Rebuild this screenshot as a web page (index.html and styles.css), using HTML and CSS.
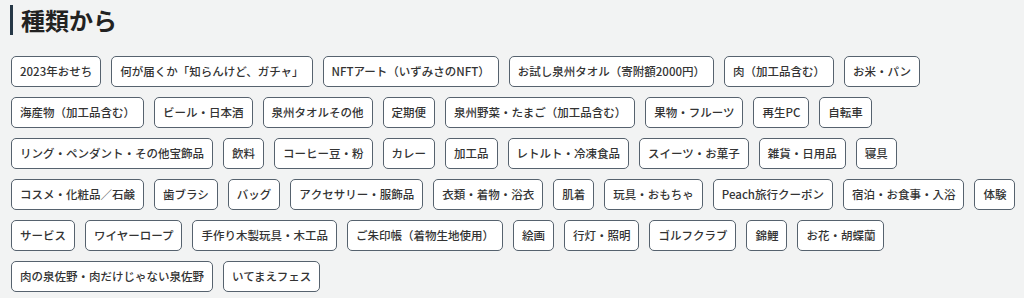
FILE: index.html
```html
<!DOCTYPE html>
<html lang="ja">
<head>
    <meta charset="UTF-8">
    <meta name="viewport" content="width=device-width, initial-scale=1.0">
    <title>種類から</title>
    <link rel="stylesheet" href="styles.css">
</head>
<body>
    <section class="category">
        <h2 class="category-title">種類から</h2>

        <div class="tag-list">
            <div class="tag-row">
                <a class="tag" href="#">2023年おせち</a>
                <a class="tag" href="#">何が届くか「知らんけど、ガチャ」</a>
                <a class="tag" href="#">NFTアート（いずみさのNFT）</a>
                <a class="tag" href="#">お試し泉州タオル（寄附額2000円）</a>
                <a class="tag" href="#">肉（加工品含む）</a>
                <a class="tag" href="#">お米・パン</a>
            </div>
            <div class="tag-row">
                <a class="tag" href="#">海産物（加工品含む）</a>
                <a class="tag" href="#">ビール・日本酒</a>
                <a class="tag" href="#">泉州タオルその他</a>
                <a class="tag" href="#">定期便</a>
                <a class="tag" href="#">泉州野菜・たまご（加工品含む）</a>
                <a class="tag" href="#">果物・フルーツ</a>
                <a class="tag" href="#">再生PC</a>
                <a class="tag" href="#">自転車</a>
            </div>
            <div class="tag-row">
                <a class="tag" href="#">リング・ペンダント・その他宝飾品</a>
                <a class="tag" href="#">飲料</a>
                <a class="tag" href="#">コーヒー豆・粉</a>
                <a class="tag" href="#">カレー</a>
                <a class="tag" href="#">加工品</a>
                <a class="tag" href="#">レトルト・冷凍食品</a>
                <a class="tag" href="#">スイーツ・お菓子</a>
                <a class="tag" href="#">雑貨・日用品</a>
                <a class="tag" href="#">寝具</a>
            </div>
            <div class="tag-row">
                <a class="tag" href="#">コスメ・化粧品／石鹸</a>
                <a class="tag" href="#">歯ブラシ</a>
                <a class="tag" href="#">バッグ</a>
                <a class="tag" href="#">アクセサリー・服飾品</a>
                <a class="tag" href="#">衣類・着物・浴衣</a>
                <a class="tag" href="#">肌着</a>
                <a class="tag" href="#">玩具・おもちゃ</a>
                <a class="tag" href="#">Peach旅行クーポン</a>
                <a class="tag" href="#">宿泊・お食事・入浴</a>
                <a class="tag" href="#">体験</a>
            </div>
            <div class="tag-row">
                <a class="tag" href="#">サービス</a>
                <a class="tag" href="#">ワイヤーロープ</a>
                <a class="tag" href="#">手作り木製玩具・木工品</a>
                <a class="tag" href="#">ご朱印帳（着物生地使用）</a>
                <a class="tag" href="#">絵画</a>
                <a class="tag" href="#">行灯・照明</a>
                <a class="tag" href="#">ゴルフクラブ</a>
                <a class="tag" href="#">錦鯉</a>
                <a class="tag" href="#">お花・胡蝶蘭</a>
            </div>
            <div class="tag-row">
                <a class="tag" href="#">肉の泉佐野・肉だけじゃない泉佐野</a>
                <a class="tag" href="#">いてまえフェス</a>
            </div>
        </div>
    </section>
</body>
</html>
```

FILE: styles.css
```css
* {
    margin: 0;
    padding: 0;
    box-sizing: border-box;
}

body {
    font-family: "Noto Sans CJK JP", "Noto Sans", sans-serif;
    background: #f2f3f3;
    color: #333;
}

.category {
    padding: 5px 11px;
}

.category-title {
    border-left: 3px solid #263746;
    padding-left: 8px;
    margin-left: -1px;
    font-size: 24px;
    line-height: 30px;
    font-weight: 700;
    color: #222;
    margin-bottom: 21px;
}

.tag-list {
    display: flex;
    flex-direction: column;
    gap: 10px;
}

.tag-row {
    display: flex;
    gap: 10px;
}

.tag {
    display: block;
    padding: 7px 8px;
    font-size: 11.5px;
    line-height: 15px;
    font-weight: 500;
    color: #333;
    text-decoration: none;
    white-space: nowrap;
    background: #fff;
    border: 1px solid #56626e;
    border-radius: 5px;
}

.tag:hover {
    background: #f7f7f7;
}
```
